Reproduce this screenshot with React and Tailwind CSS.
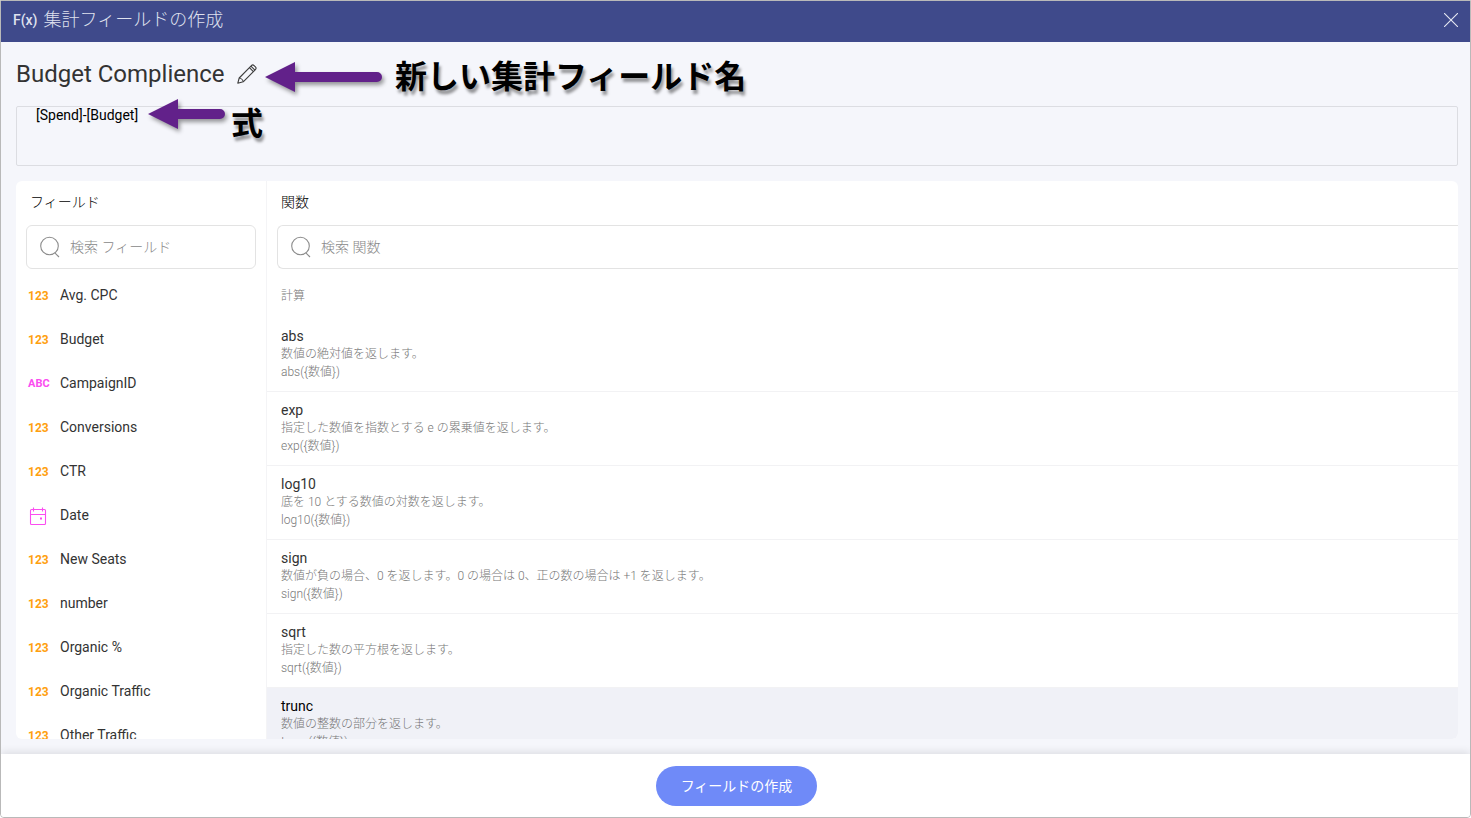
import { useState } from 'react';
import clsx from 'clsx';

const FIELDS = [
  { name: 'Avg. CPC', type: 'number' },
  { name: 'Budget', type: 'number' },
  { name: 'CampaignID', type: 'text' },
  { name: 'Conversions', type: 'number' },
  { name: 'CTR', type: 'number' },
  { name: 'Date', type: 'date' },
  { name: 'New Seats', type: 'number' },
  { name: 'number', type: 'number' },
  { name: 'Organic %', type: 'number' },
  { name: 'Organic Traffic', type: 'number' },
  { name: 'Other Traffic', type: 'number' },
];

const FUNCTIONS = [
  { name: 'abs', description: '数値の絶対値を返します。' },
  { name: 'exp', description: '指定した数値を指数とする e の累乗値を返します。' },
  { name: 'log10', description: '底を 10 とする数値の対数を返します。' },
  { name: 'sign', description: '数値が負の場合、0 を返します。0 の場合は 0、正の数の場合は +1 を返します。' },
  { name: 'sqrt', description: '指定した数の平方根を返します。' },
  { name: 'trunc', description: '数値の整数の部分を返します。' },
];

const CalendarIcon = () => (
  <svg width="20" height="20" viewBox="0 0 20 20" fill="none" stroke="#fb4df0" strokeWidth="1.1" aria-hidden="true">
    <rect x="2.5" y="3.5" width="15" height="15" rx="1" />
    <path d="M2.5 8.5h15M5.5 1.5v4M14.5 1.5v4" />
    <rect x="12" y="11.5" width="2" height="2" fill="#fb4df0" stroke="none" />
  </svg>
);

const SearchIcon = () => (
  <svg className="shrink-0" width="20" height="22" viewBox="0 0 20 22" fill="none" stroke="#8c8c8c" strokeWidth="1.1" aria-hidden="true">
    <circle cx="9.5" cy="10" r="8.8" />
    <path d="M14.8 16.8l4.2 4.2" />
  </svg>
);

const PencilIcon = () => (
  <svg width="20" height="20" viewBox="0 0 20 20" fill="none" stroke="#3c3c3c" strokeWidth="1.1" strokeLinejoin="round" aria-hidden="true">
    <path d="M.8 19.2l1.4-5.200L14.400 1.600c.8-.8 1.900-.8 2.700 0l1.300 1.300c.8.8.8 1.900 0 2.700L6.200 17.800z" />
    <path d="M2.200 14c1.800.2 3.800 2 4 3.800M12.400 3.600l4 4M13.900 2.100l4 4" />
  </svg>
);

const Arrow = ({ length }) => (
  <svg className="shrink-0 drop-shadow-[2px_3px_2px_rgba(0,0,0,0.4)]" width={length} height="30" aria-hidden="true">
    <path
      d={`M0 15L30 0V10H${length - 5}a5 5 0 0 1 0 10H30V30z`}
      fill="#62218a"
    />
  </svg>
);

const Annotation = ({ length, className, children }) => (
  <div className={clsx('pointer-events-none absolute flex', className)}>
    <Arrow length={length} />
    <span className="text-[32px] leading-[30px] font-bold whitespace-nowrap text-black [text-shadow:2px_4px_3px_rgba(0,0,0,0.4)]">
      {children}
    </span>
  </div>
);

const FieldIcon = ({ type }) => {
  if (type === 'date') return <CalendarIcon />;
  if (type === 'text') return <span className="text-[11px] font-bold text-[#fb4df0]">ABC</span>;
  return <span className="text-xs font-bold text-[#ff9f0f]">123</span>;
};

const SearchBox = ({ id, label, value, onChange, className }) => (
  <label htmlFor={id} className={clsx('flex h-11 items-center gap-2.5 border border-[#e3e3e3] bg-white pl-[13px]', className)}>
    <SearchIcon />
    <input
      id={id}
      type="text"
      aria-label={label}
      placeholder={label}
      value={value}
      onChange={(e) => onChange(e.target.value)}
      className="min-w-0 flex-1 bg-transparent text-sm font-light text-[#333] outline-none placeholder:text-[#888]"
    />
  </label>
);

const App = () => {
  const [formula, setFormula] = useState('[Spend]-[Budget]');
  const [fieldSearch, setFieldSearch] = useState('');
  const [functionSearch, setFunctionSearch] = useState('');
  const [selected, setSelected] = useState('trunc');

  const fields = FIELDS.filter((f) => f.name.toLowerCase().includes(fieldSearch.toLowerCase()));
  const functions = FUNCTIONS.filter((f) => f.name.includes(functionSearch.toLowerCase()));

  return (
    <div className="flex h-screen flex-col overflow-hidden rounded-b-sm border border-[#b9b9b9] bg-[#f5f6fb] font-['Roboto','Noto_Sans_CJK_JP',sans-serif] text-[#333]">
      <header className="flex h-[41px] shrink-0 items-center justify-between bg-[#3f4a8b] px-3 pb-1 text-[#dfe1ee]">
        <div className="flex items-center gap-1.5">
          <span className="text-sm font-medium">F(x)</span>
          <h1 className="text-lg leading-6 font-light">集計フィールドの作成</h1>
        </div>
        <button type="button" aria-label="閉じる">
          <svg width="14" height="14" viewBox="0 0 14 14" stroke="#e6e8f2" strokeWidth="1.1" aria-hidden="true">
            <path d="M0 0l14 14M14 0L0 14" />
          </svg>
        </button>
      </header>

      <main className="relative flex min-h-0 flex-1 flex-col pr-3 pb-[15px] pl-[15px]">
        <div className="flex h-16 shrink-0 items-center gap-3">
          <h2 className="text-2xl">Budget Complience</h2>
          <button type="button" aria-label="名前の編集">
            <PencilIcon />
          </button>
        </div>

        <textarea
          aria-label="式"
          spellCheck="false"
          value={formula}
          onChange={(e) => setFormula(e.target.value)}
          className="h-[60px] shrink-0 resize-none rounded-xs border border-[#dcdde2] bg-transparent pl-[19px] text-sm leading-4 text-black outline-none"
        />

        <Annotation length={117} className="top-5 left-[264px] gap-[13px]">新しい集計フィールド名</Annotation>
        <Annotation length={77} className="top-[57px] left-[147px] items-start gap-1.5">
          <span className="block pt-2.5">式</span>
        </Annotation>

        <div className="mt-[15px] flex min-h-0 flex-1 overflow-hidden rounded-md bg-white">
          <section className="flex w-[250px] shrink-0 flex-col">
            <h3 className="flex h-11 shrink-0 items-center pb-0.5 pl-3.5 text-sm font-light text-black">フィールド</h3>
            <SearchBox
              id="field-search"
              label="検索 フィールド"
              value={fieldSearch}
              onChange={setFieldSearch}
              className="mx-2.5 shrink-0 rounded-md"
            />
            <ul className="mt-1 min-h-0 flex-1 overflow-hidden">
              {fields.map((field) => (
                <li key={field.name}>
                  <button
                    type="button"
                    onClick={() => setFormula(`${formula}[${field.name}]`)}
                    className="flex h-11 w-full items-center pl-3 text-left text-sm"
                  >
                    <span className="flex w-8 items-center pt-0.5">
                      <FieldIcon type={field.type} />
                    </span>
                    {field.name}
                  </button>
                </li>
              ))}
            </ul>
          </section>

          <section className="flex min-w-0 flex-1 flex-col border-l border-[#f4f4f6]">
            <h3 className="flex h-11 shrink-0 items-center pb-0.5 pl-3.5 text-sm font-light text-black">関数</h3>
            <SearchBox
              id="function-search"
              label="検索 関数"
              value={functionSearch}
              onChange={setFunctionSearch}
              className="ml-2.5 shrink-0 rounded-l-md border-r-0"
            />
            <div className="mt-1 min-h-0 flex-1 overflow-hidden">
              <h4 className="flex h-[45px] items-center pl-3.5 text-xs font-light text-[#777]">計算</h4>
              <ul>
                {functions.map((fn) => (
                  <li key={fn.name}>
                    <button
                      type="button"
                      onClick={() => setSelected(fn.name)}
                      className={clsx(
                        'flex h-[74px] w-full flex-col border-b border-[#f2f2f4] pt-[9px] pl-3.5 text-left',
                        selected === fn.name && 'bg-[#f0f1f7] text-black'
                      )}
                    >
                      <span className="text-sm leading-[18px]">{fn.name}</span>
                      <span className="text-xs leading-[18px] font-light text-[#777]">{fn.description}</span>
                      <span className="text-xs leading-[18px] font-light text-[#777]">{`${fn.name}({数値})`}</span>
                    </button>
                  </li>
                ))}
              </ul>
            </div>
          </section>
        </div>
      </main>

      <footer className="flex h-[63px] shrink-0 items-center justify-center bg-white pl-0.5 shadow-[0_-2px_8px_rgba(0,0,0,0.1)]">
        <button type="button" className="h-10 rounded-full bg-[#6f8af8] px-[25px] text-sm text-white">
          フィールドの作成
        </button>
      </footer>
    </div>
  );
};

export default App;
